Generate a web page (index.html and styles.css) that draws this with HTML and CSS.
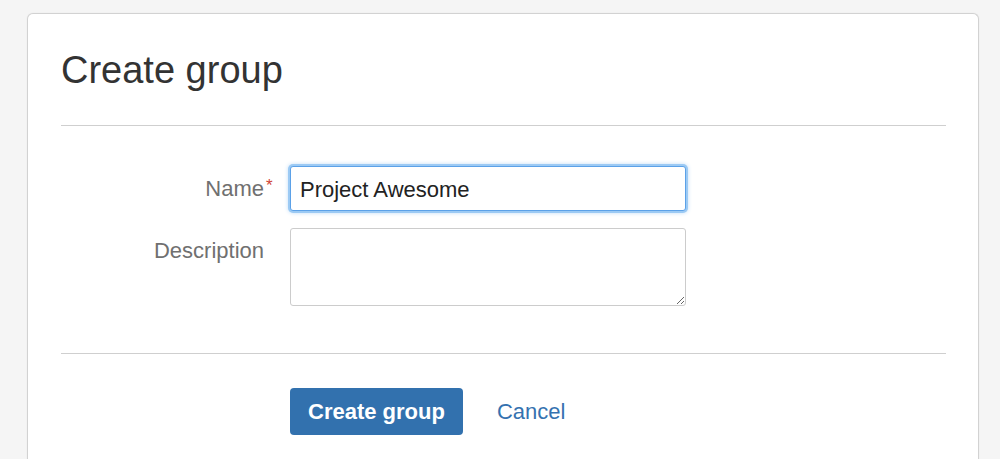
FILE: index.html
```html
<!DOCTYPE html>
<html lang="en">
<head>
    <meta charset="UTF-8">
    <meta name="viewport" content="width=device-width, initial-scale=1.0">
    <title>Create group</title>
    <link rel="stylesheet" href="styles.css">
</head>
<body>

    <div class="dialog">
        <header class="dialog-header">
            <h1>Create group</h1>
        </header>

        <form id="createGroupForm" class="dialog-body">
            <div class="field-group">
                <label for="groupName"><span class="label-text">Name<span class="required">*</span></span></label>
                <input type="text" id="groupName" class="text focused" value="Project Awesome">
            </div>

            <div class="field-group">
                <label for="groupDescription"><span class="label-text">Description</span></label>
                <textarea id="groupDescription" class="textarea"></textarea>
            </div>
        </form>

        <div class="dialog-footer">
            <button type="button" class="button-primary">Create group</button>
            <a href="#" class="cancel">Cancel</a>
        </div>
    </div>

</body>
</html>
```

FILE: styles.css
```css
body {
    margin: 0;
    padding: 13px 21px 0 27px;
    background-color: #f5f5f5;
    font-family: "Liberation Sans", Arial, sans-serif;
    color: #333;
}

.dialog {
    background-color: #fff;
    border: 1px solid #d2d2d2;
    border-bottom: none;
    border-radius: 6px 6px 0 0;
    padding: 33px 32px 40px 33px;
    box-shadow: 0 0 2px rgba(0, 0, 0, 0.06);
}

.dialog-header {
    padding-bottom: 32px;
    border-bottom: 1px solid #cfcfcf;
}

h1 {
    margin: 0;
    font-size: 38px;
    line-height: 46px;
    font-weight: normal;
    color: #333;
}

.dialog-body {
    padding: 40px 0 47px;
    border-bottom: 1px solid #cfcfcf;
}

.field-group {
    display: grid;
    grid-template-columns: 203px 396px;
    column-gap: 26px;
    margin-bottom: 17px;
}

.field-group:last-child {
    margin-bottom: 0;
}

label {
    text-align: right;
    font-size: 22px;
    line-height: 45px;
    color: #707070;
}

.label-text {
    position: relative;
}

/* Sternchen rechts neben dem Label */
.required {
    position: absolute;
    left: 100%;
    top: -13px;
    margin-left: 2px;
    font-size: 17px;
    color: #d04437;
}

.text,
.textarea {
    box-sizing: border-box;
    width: 396px;
    margin: 0;
    border: 1px solid #cccccc;
    border-radius: 3px;
    padding: 0 9px;
    font-family: "Liberation Sans", Arial, sans-serif;
    font-size: 22px;
    color: #222;
    background-color: #fff;
}

.text {
    height: 45px;
    padding-top: 2px;
}

.text.focused {
    border-color: #5ba1e8;
    box-shadow: 0 0 0 2px #9ccaf4, 0 0 4px 2px #c2def8;
    outline: none;
}

.textarea {
    height: 78px;
    padding-top: 9px;
    resize: vertical;
}

.dialog-footer {
    display: flex;
    align-items: center;
    gap: 34px;
    padding: 34px 0 0 229px;
}

.button-primary {
    height: 47px;
    padding: 0 18px;
    border: none;
    border-radius: 4px;
    background-color: #3271ae;
    color: #fff;
    font-family: "Liberation Sans", Arial, sans-serif;
    font-size: 22px;
    font-weight: bold;
}

.cancel {
    font-size: 22px;
    color: #3572b0;
    text-decoration: none;
}
```
